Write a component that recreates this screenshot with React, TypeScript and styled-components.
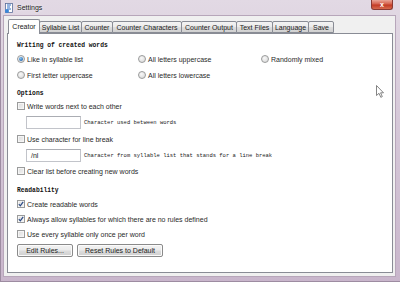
import React from 'react'
import styled, { createGlobalStyle } from 'styled-components'

const GlobalStyle = createGlobalStyle`
    html, body {
        margin: 0;
        padding: 0;
        width: 400px;
        height: 282px;
        overflow: hidden;
        background: #c9b9cc;
    }
    * {
        box-sizing: border-box;
    }
`

const Window = styled.div`
    position: relative;
    width: 400px;
    height: 282px;
    display: flex;
    flex-direction: column;
    background: linear-gradient(180deg, #e2d9e4 0%, #d6c9d9 40%, #c9b6cc 100%);
    border-left: 1px solid #9d8ca1;
    border-bottom: 1px solid #9d8ca1;
    font-family: 'Liberation Sans', Arial, sans-serif;
    font-size: 7px;
    color: #2a2a2a;
`

const TitleBar = styled.div`
    height: 15px;
    display: flex;
    align-items: center;
    padding-left: 3px;
    gap: 3px;
`

const Title = styled.span`
    font-size: 7px;
    color: #222;
    text-shadow: 0 0 3px #fff;
`

const CloseButton = styled.div`
    align-self: flex-start;
    margin-left: auto;
    margin-right: 7px;
    width: 22px;
    height: 10px;
    border: 1px solid #8a3a33;
    border-top: none;
    border-radius: 0 0 3px 3px;
    background: linear-gradient(180deg, #e9a597 0%, #d5604c 45%, #c23a24 55%, #d76a4e 100%);
    display: flex;
    align-items: center;
    justify-content: center;
    color: #fff;
    font-size: 7px;
    font-weight: bold;
    line-height: 1;
`

const Client = styled.div`
    flex: 1;
    margin: 0 4px 4px 2px;
    background: #f0f0f0;
    border: 1px solid #b7a6ba;
    display: flex;
    flex-direction: column;
    padding: 2px 2px 3px 3px;
`

const TabStrip = styled.div`
    display: flex;
    align-items: flex-end;
    height: 15px;
    padding-left: 1px;
    position: relative;
    z-index: 1;
`

const Tab = styled.div<{ $active?: boolean; $w: number }>`
    width: ${(p) => p.$w}px;
    height: ${(p) => (p.$active ? 15 : 12)}px;
    margin-right: -1px;
    margin-bottom: ${(p) => (p.$active ? -1 : 0)}px;
    border: 1px solid #898c95;
    border-bottom: ${(p) => (p.$active ? 'none' : '1px solid #898c95')};
    border-radius: 2px 2px 0 0;
    background: ${(p) =>
        p.$active
            ? '#ffffff'
            : 'linear-gradient(180deg, #f3f3f3 0%, #ebebeb 48%, #dedede 52%, #d0d0d0 100%)'};
    display: flex;
    align-items: center;
    justify-content: center;
    white-space: nowrap;
    font-size: 7px;
    color: #222;
    padding-bottom: ${(p) => (p.$active ? 1 : 0)}px;
    position: relative;
    z-index: ${(p) => (p.$active ? 2 : 1)};
`

const Panel = styled.div`
    flex: 1;
    background: #fff;
    border: 1px solid #898c95;
    padding: 8px 0 0 9px;
    display: flex;
    flex-direction: column;
`

const Heading = styled.div<{ $gap: number }>`
    margin-top: ${(p) => p.$gap}px;
    height: 8px;
    line-height: 8px;
    font-family: 'Liberation Mono', 'Courier New', monospace;
    font-weight: bold;
    font-size: 6.3px;
    color: #111;
`

const RadioGrid = styled.div`
    display: grid;
    grid-template-columns: 121px 123px auto;
    grid-auto-rows: 16px;
    margin-top: 1px;
`

const Option = styled.label<{ $gap?: number }>`
    display: flex;
    align-items: center;
    gap: 2px;
    height: 12px;
    margin-top: ${(p) => p.$gap ?? 0}px;
    white-space: nowrap;
    color: #2a2a2a;
`

const RadioCell = styled(Option)`
    height: 16px;
    margin: 0;
`

const RadioDot = styled.span<{ $on?: boolean }>`
    width: 8px;
    height: 8px;
    border-radius: 50%;
    border: 1px solid #9a9b9b;
    background: radial-gradient(circle at 40% 35%, #f8f8f8 0%, #dcdcdc 80%);
    display: flex;
    align-items: center;
    justify-content: center;
    flex: none;
    &::after {
        content: '';
        display: ${(p) => (p.$on ? 'block' : 'none')};
        width: 4px;
        height: 4px;
        border-radius: 50%;
        background: radial-gradient(circle at 40% 35%, #8cc8f2 0%, #2a6fb7 70%, #1b4f8a 100%);
    }
`

const Box = styled.span`
    width: 8px;
    height: 8px;
    border: 1px solid #9a9b9b;
    background: linear-gradient(135deg, #dcdcdc 0%, #f4f4f4 100%);
    box-shadow: inset 0 0 0 1px #f5f5f5;
    display: flex;
    align-items: center;
    justify-content: center;
    flex: none;
`

const FieldRow = styled.div<{ $gap: number }>`
    display: flex;
    align-items: center;
    gap: 3px;
    margin-top: ${(p) => p.$gap}px;
    padding-left: 9px;
    height: 13px;
`

const TextInput = styled.div`
    width: 55px;
    height: 13px;
    border: 1px solid #c2c4ca;
    border-top-color: #abadb3;
    background: #fff;
    font-size: 7px;
    line-height: 11px;
    padding-left: 4px;
    color: #222;
`

const FieldLabel = styled.span`
    font-family: 'Liberation Mono', 'Courier New', monospace;
    font-size: 5.5px;
    color: #222;
    white-space: nowrap;
`

const ButtonRow = styled.div`
    display: flex;
    gap: 4px;
    margin-top: 4px;
`

const Button = styled.div<{ $w: number }>`
    width: ${(p) => p.$w}px;
    height: 13px;
    border: 1px solid #8a8a8a;
    border-radius: 2px;
    background: linear-gradient(180deg, #f2f2f2 0%, #ebebeb 48%, #dddddd 52%, #cfcfcf 100%);
    box-shadow: inset 0 0 0 1px #fbfbfb;
    display: flex;
    align-items: center;
    justify-content: center;
    font-size: 7px;
    color: #222;
`

const Cursor = styled.svg`
    position: absolute;
    left: 375px;
    top: 85px;
`

const tabs = [
    { label: 'Creator', w: 32, active: true },
    { label: 'Syllable List', w: 43 },
    { label: 'Counter', w: 32 },
    { label: 'Counter Characters', w: 70 },
    { label: 'Counter Output', w: 56 },
    { label: 'Text Files', w: 37 },
    { label: 'Language', w: 37 },
    { label: 'Save', w: 26 },
]

const Tick = () => (
    <svg width="6" height="6" viewBox="0 0 6 6">
        <path d="M0.8 3.2 L2.3 4.8 L5.2 0.9" stroke="#2b4a86" strokeWidth="1.2" fill="none" />
    </svg>
)

const Check: React.FC<{ on?: boolean; gap: number; children: React.ReactNode }> = ({
    on,
    gap,
    children,
}) => (
    <Option $gap={gap}>
        <Box>{on && <Tick />}</Box>
        {children}
    </Option>
)

const Radio: React.FC<{ on?: boolean; children: React.ReactNode }> = ({ on, children }) => (
    <RadioCell>
        <RadioDot $on={on} />
        {children}
    </RadioCell>
)

const AppIcon = () => (
    <svg width="10" height="10" viewBox="0 0 10 10">
        <rect x="1.5" y="0.5" width="7" height="9" fill="#fdfdfd" stroke="#5a6f9a" strokeWidth="0.8" />
        <path d="M3 2 H7 M3 4 H6 M3 6 H7" stroke="#2f6fc4" strokeWidth="1" />
        <circle cx="3" cy="8" r="2" fill="#3a86d8" />
    </svg>
)

const App: React.FC = () => {
    return (
        <>
            <GlobalStyle />
            <Window>
                <TitleBar>
                    <AppIcon />
                    <Title>Settings</Title>
                    <CloseButton>x</CloseButton>
                </TitleBar>
                <Client>
                    <TabStrip>
                        {tabs.map((t) => (
                            <Tab key={t.label} $w={t.w} $active={t.active}>
                                {t.label}
                            </Tab>
                        ))}
                    </TabStrip>
                    <Panel>
                        <Heading $gap={0}>Writing of created words</Heading>
                        <RadioGrid>
                            <Radio on>Like in syllable list</Radio>
                            <Radio>All letters uppercase</Radio>
                            <Radio>Randomly mixed</Radio>
                            <Radio>First letter uppercase</Radio>
                            <Radio>All letters lowercase</Radio>
                        </RadioGrid>
                        <Heading $gap={7}>Options</Heading>
                        <Check gap={2}>Write words next to each other</Check>
                        <FieldRow $gap={4}>
                            <TextInput />
                            <FieldLabel>Character used between words</FieldLabel>
                        </FieldRow>
                        <Check gap={4}>Use character for line break</Check>
                        <FieldRow $gap={4}>
                            <TextInput>/nl</TextInput>
                            <FieldLabel>
                                Character from syllable list that stands for a line break
                            </FieldLabel>
                        </FieldRow>
                        <Check gap={3}>Clear list before creating new words</Check>
                        <Heading $gap={10}>Readability</Heading>
                        <Check on gap={3}>
                            Create readable words
                        </Check>
                        <Check on gap={3}>
                            Always allow syllables for which there are no rules defined
                        </Check>
                        <Check gap={3}>Use every syllable only once per word</Check>
                        <ButtonRow>
                            <Button $w={56}>Edit Rules...</Button>
                            <Button $w={86}>Reset Rules to Default</Button>
                        </ButtonRow>
                    </Panel>
                </Client>
                <Cursor width="8" height="13" viewBox="0 0 8 13">
                    <path
                        d="M0.5 0.5 L0.5 10.5 L3 8.3 L4.8 12.3 L6.3 11.6 L4.6 7.8 L7.5 7.8 Z"
                        fill="#fff"
                        stroke="#666"
                        strokeWidth="0.8"
                    />
                </Cursor>
            </Window>
        </>
    )
}

export default App
